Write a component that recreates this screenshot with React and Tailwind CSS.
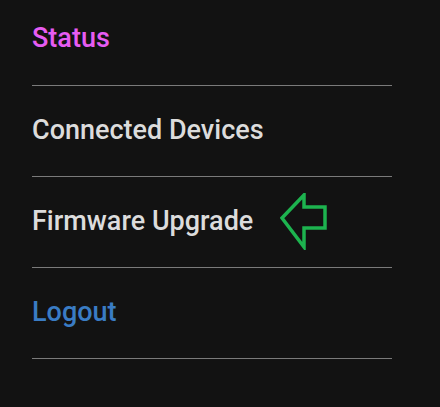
import React from "react";

function ArrowLeft() {
  return (
    <svg width="48" height="57" viewBox="0 0 48 57" className="ml-[27px]" fill="none">
      <path
        d="M2 25 L24 2 L24 14 L45 14 L45 35 L24 35 L24 54 Z"
        stroke="#1db34f"
        strokeWidth="3.5"
        strokeLinejoin="miter"
      />
    </svg>
  );
}

export default function App() {
  const items = [
    { label: "Status", color: "text-[#e65cf2]" },
    { label: "Connected Devices", color: "text-[#dcdcdc]" },
    { label: "Firmware Upgrade", color: "text-[#dcdcdc]", arrow: true },
    { label: "Logout", color: "text-[#3a7cc4]" },
  ];

  return (
    <div className="min-h-screen bg-[#121212]" style={{ fontFamily: "Roboto, sans-serif" }}>
      <ul className="ml-8 w-[360px]">
        {items.map((item) => (
          <li
            key={item.label}
            className="flex h-[91px] items-center border-b border-[#7a7a7a] pt-[31px] pb-[32px] first:h-[86px] first:pt-[25px] first:pb-[33px]"
          >
            <span className={`text-[27px] font-medium leading-none ${item.color}`}>
              {item.label}
            </span>
            {item.arrow && <ArrowLeft />}
          </li>
        ))}
      </ul>
    </div>
  );
}
